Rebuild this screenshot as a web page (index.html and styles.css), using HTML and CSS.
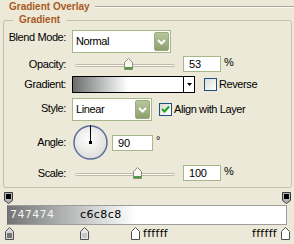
FILE: index.html
```html
<!DOCTYPE html>
<html>
<head>
<meta charset="utf-8">
<link rel="stylesheet" href="styles.css">
</head>
<body>
<div class="header"><span class="title">Gradient Overlay</span><span class="rule"></span></div>
<fieldset class="group">
  <legend>Gradient</legend>
  <div class="row row-blend">
    <span class="label label-top1">Blend Mode:</span>
    <div class="select select-blend">
      <span class="select-text">Normal</span>
      <span class="select-btn"><svg width="13" height="17" viewBox="0 0 13 17"><polyline points="3,7 6.5,10.5 10,7" fill="none" stroke="#fff" stroke-width="2"/></svg></span>
    </div>
  </div>
  <div class="row row-opacity">
    <span class="label">Opacity:</span>
    <div class="slider">
      <div class="track"></div>
      <svg class="thumb" style="left:52px" width="9" height="12" viewBox="0 0 9 12"><path d="M4.5 0.5 L8.5 4.5 V11.5 H0.5 V4.5 Z" fill="#f7f7f2" stroke="#8d8c80"/><rect x="1" y="9" width="7" height="2" fill="#4f9e38"/></svg>
    </div>
    <div class="num">53</div><span class="unit">%</span>
  </div>
  <div class="row row-gradient">
    <span class="label">Gradient:</span>
    <div class="gradbox">
      <div class="gradfill"></div>
      <div class="gradarrow"><svg width="5" height="3" viewBox="0 0 5 3"><path d="M0 0 H5 L2.5 3 Z" fill="#000"/></svg></div>
    </div>
    <span class="check check-reverse"></span><span class="check-label">Reverse</span>
  </div>
  <div class="row row-style">
    <span class="label label-top4">Style:</span>
    <div class="select select-style">
      <span class="select-text">Linear</span>
      <span class="select-btn"><svg width="13" height="17" viewBox="0 0 13 17"><polyline points="3,7 6.5,10.5 10,7" fill="none" stroke="#fff" stroke-width="2"/></svg></span>
    </div>
    <span class="check check-align"><svg width="11" height="11" viewBox="0 0 11 11"><path d="M2 5 L4.5 7.5 L9 2.5" fill="none" stroke="#21a121" stroke-width="2"/></svg></span><span class="check-label">Align with Layer</span>
  </div>
  <div class="row row-angle">
    <span class="label">Angle:</span>
    <svg class="dial" width="35" height="35" viewBox="0 0 35 35">
      <defs><radialGradient id="dg" cx="45%" cy="40%" r="65%"><stop offset="0" stop-color="#ffffff"/><stop offset="1" stop-color="#dadad6"/></radialGradient></defs>
      <circle cx="17.5" cy="17.5" r="16.5" fill="url(#dg)" stroke="#5a6e9c" stroke-width="1.5"/>
      <line x1="17.5" y1="17.5" x2="17.5" y2="0" stroke="#000" stroke-width="1"/>
      <rect x="16" y="16" width="3" height="3" fill="#000"/>
    </svg>
    <div class="num num-angle">90</div><span class="deg">°</span>
  </div>
  <div class="row row-scale">
    <span class="label">Scale:</span>
    <div class="slider">
      <div class="track"></div>
      <svg class="thumb" style="left:61px" width="9" height="12" viewBox="0 0 9 12"><path d="M4.5 0.5 L8.5 4.5 V11.5 H0.5 V4.5 Z" fill="#f7f7f2" stroke="#8d8c80"/><rect x="1" y="9" width="7" height="2" fill="#4f9e38"/></svg>
    </div>
    <div class="num">100</div><span class="unit">%</span>
  </div>
</fieldset>
<div class="editor">
  <div class="stops stops-top">
    <svg class="stop" style="left:-3px" width="9" height="12" viewBox="0 0 9 12"><path d="M0.5 0.5 H8.5 V8.5 L4.5 11.5 L0.5 8.5 Z" fill="#b4b4b4" stroke="#3c3c3c"/><rect x="2" y="2" width="5" height="5" fill="#000"/></svg>
    <svg class="stop" style="left:275px" width="9" height="12" viewBox="0 0 9 12"><path d="M0.5 0.5 H8.5 V8.5 L4.5 11.5 L0.5 8.5 Z" fill="#b4b4b4" stroke="#3c3c3c"/><rect x="2" y="2" width="5" height="5" fill="#000"/></svg>
  </div>
  <div class="gbar">
    <span class="gtag gtag-light" style="left:2px">747474</span>
    <span class="gtag" style="left:72px">c6c8c8</span>
  </div>
  <div class="stops stops-bottom">
    <svg class="stop" style="left:-2px" width="9" height="13" viewBox="0 0 9 13"><path d="M4.5 0.5 L8.5 4.5 V12.5 H0.5 V4.5 Z" fill="#d8d8d8" stroke="#505050"/><rect x="2" y="6" width="5" height="5" fill="#747474"/></svg>
    <svg class="stop" style="left:73px" width="9" height="13" viewBox="0 0 9 13"><path d="M4.5 0.5 L8.5 4.5 V12.5 H0.5 V4.5 Z" fill="#e8e8e8" stroke="#505050"/><rect x="2" y="6" width="5" height="5" fill="#c6c8c8"/></svg>
    <svg class="stop" style="left:124px" width="9" height="13" viewBox="0 0 9 13"><path d="M4.5 0.5 L8.5 4.5 V12.5 H0.5 V4.5 Z" fill="#fff" stroke="#505050"/><rect x="2" y="6" width="5" height="5" fill="#fff"/></svg>
    <span class="stag" style="left:136px">ffffff</span>
    <span class="stag stag-right" style="right:10px">ffffff</span>
    <svg class="stop" style="left:274px" width="9" height="13" viewBox="0 0 9 13"><path d="M4.5 0.5 L8.5 4.5 V12.5 H0.5 V4.5 Z" fill="#fff" stroke="#505050"/><rect x="2" y="6" width="5" height="5" fill="#fff"/></svg>
  </div>
</div>
</body>
</html>
```

FILE: styles.css
```css
* { box-sizing: border-box; }
html, body { margin: 0; padding: 0; }
body {
  width: 294px;
  height: 244px;
  overflow: hidden;
  background: #ece9d8;
  font-family: "Liberation Sans", Arial, sans-serif;
  font-size: 11px;
  color: #000;
}

.header {
  display: flex;
  align-items: flex-start;
  height: 13px;
  padding-left: 9px;
}
.title {
  margin-top: 1px;
  font-weight: bold;
  font-size: 10px;
  line-height: 12px;
  color: #a85a1e;
  white-space: nowrap;
}
.rule {
  flex: 1;
  margin-top: 6px;
  margin-left: 5px;
  height: 2px;
  border-top: 1px solid #aca899;
  border-bottom: 1px solid #fbfaf5;
}

.group {
  margin: 1px 2px 0 3px;
  padding: 4px 0 6px 0;
  border: 1px solid #c3c0ae;
  border-radius: 3px;
  min-width: 0;
}
.group legend {
  margin-left: 9px;
  padding: 0 6px;
  font-weight: bold;
  font-size: 10px;
  line-height: 12px;
  color: #a85a1e;
}

.row {
  display: flex;
  align-items: center;
}
.row-blend { height: 23px; }
.row-opacity { height: 16px; margin-top: 3px; }
.row-gradient { height: 17px; margin-top: 4px; }
.row-style { height: 23px; margin-top: 5px; }
.row-angle { height: 35px; margin-top: 4px; }
.row-scale { height: 16px; margin-top: 5px; }

.label {
  flex: none;
  width: 62px;
  margin-right: 6px;
  text-align: right;
  line-height: 13px;
  letter-spacing: -0.4px;
  white-space: nowrap;
}
.label-top1 { align-self: flex-start; margin-top: 1px; }
.label-top4 { align-self: flex-start; margin-top: 4px; }

.select {
  display: flex;
  align-items: center;
  height: 23px;
  padding: 1px;
  border: 1px solid #a6b889;
  background: #fff;
}
.select-blend { width: 99px; }
.select-style { width: 80px; }
.select-text {
  flex: 1;
  padding-left: 2px;
  letter-spacing: -0.4px;
  line-height: 13px;
}
.select-btn {
  flex: none;
  display: flex;
  width: 15px;
  height: 19px;
  border: 1px solid #99aa7b;
  border-radius: 2px;
  background: linear-gradient(#b8c69d, #8fa06e);
}

.slider {
  position: relative;
  flex: none;
  width: 104px;
  height: 16px;
}
.track {
  margin: 8px 1px 0 3px;
  height: 3px;
  border: 1px solid #bdbaa8;
  border-radius: 2px;
  background: #f8f7f2;
}
.thumb {
  position: absolute;
  top: 2px;
}

.num {
  flex: none;
  width: 38px;
  height: 16px;
  margin-left: 7px;
  padding-left: 5px;
  border: 1px solid #a6b889;
  background: #fff;
  line-height: 14px;
  letter-spacing: -0.2px;
}
.num-angle { width: 41px; margin-left: 4px; }
.unit { margin-left: 3px; line-height: 13px; align-self: flex-start; }
.deg { margin-left: 3px; line-height: 13px; align-self: flex-start; margin-top: 9px; }

.gradbox {
  flex: none;
  display: flex;
  width: 123px;
  height: 17px;
  border: 1px solid #000;
  box-shadow: inset 1px 1px 0 #3a3a3a;
}
.gradfill {
  flex: 1;
  background: linear-gradient(to right, #6c6c6c 0%, #c6c8c8 30%, #ffffff 50%, #ffffff 100%);
}
.gradarrow {
  flex: none;
  width: 11px;
  display: flex;
  align-items: center;
  justify-content: center;
  border-left: 1px solid #000;
  background: #fff;
}

.check {
  flex: none;
  display: flex;
  align-items: center;
  justify-content: center;
  width: 13px;
  height: 13px;
  border: 1px solid #1c5180;
  background: linear-gradient(135deg, #dcdcd6, #ffffff);
}
.check-reverse { margin-left: 9px; }
.check-align { margin-left: 7px; }
.check-label {
  margin-left: 2px;
  letter-spacing: -0.4px;
  line-height: 13px;
  white-space: nowrap;
}

.dial { flex: none; margin-left: 1px; }

.editor {
  margin: 4px 7px 0 7px;
  width: 280px;
}
.stops { position: relative; }
.stops-top { height: 12px; }
.stops-bottom { height: 13px; margin-top: 2px; }
.stop { position: absolute; top: 0; }

.gbar {
  position: relative;
  height: 20px;
  margin-top: 1px;
  border: 1px solid #9d9d9d;
  border-left-color: #6e6e6e;
  background: linear-gradient(to right, #747474 0%, #c6c8c8 27%, #ffffff 46%, #ffffff 100%);
}
.gtag, .stag {
  position: absolute;
  font-family: "DejaVu Sans", Verdana, sans-serif;
  font-size: 11px;
  letter-spacing: 0.4px;
  white-space: nowrap;
}
.gtag { top: 2px; line-height: 14px; }
.gtag-light { color: #f4f4f4; }
.stag { top: 0; line-height: 13px; letter-spacing: 0.3px; }
```
